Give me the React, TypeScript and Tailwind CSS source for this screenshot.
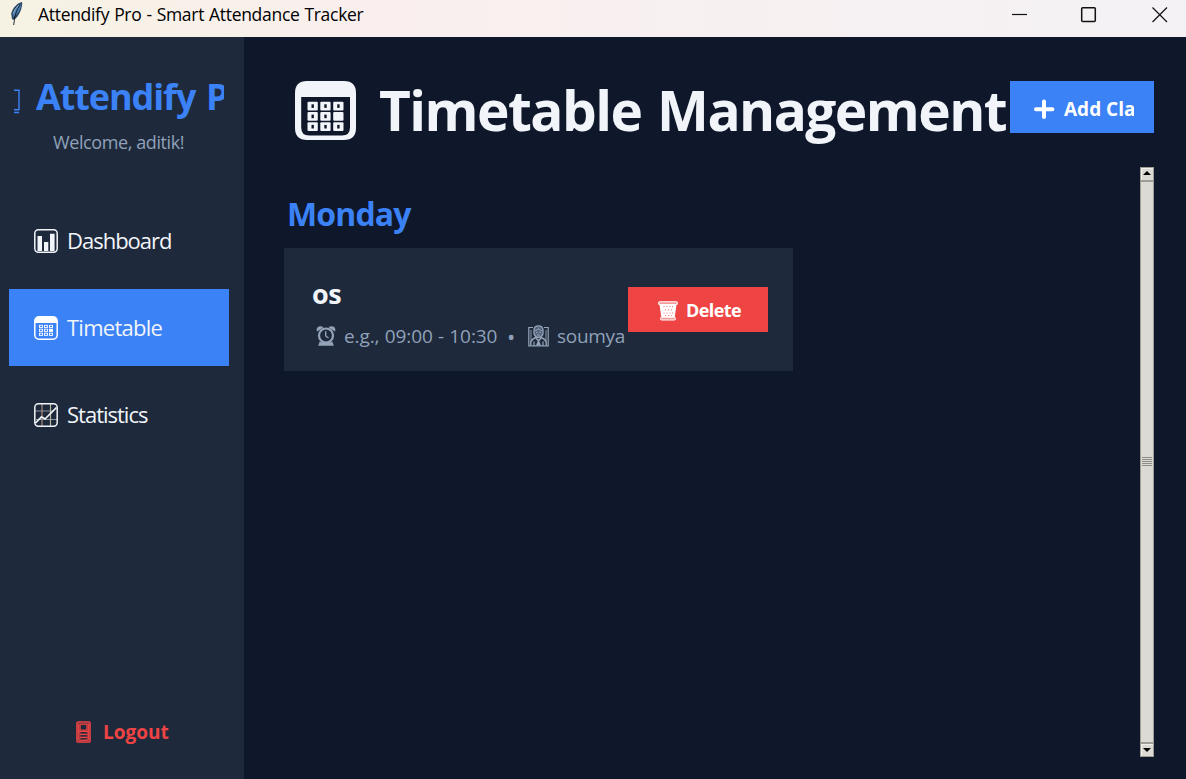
import type { ReactNode } from 'react';

function LargeCalendar() {
  const cols = [12.5, 25.3, 38.2];
  const rows = [20.7, 31, 41.3];
  return (
    <svg width="61" height="59" viewBox="0 0 61 59" className="shrink-0">
      <path fillRule="evenodd" fill="#f1f5f9" d="M12 0H49Q61 0 61 12V47Q61 59 49 59H12Q0 59 0 47V12Q0 0 12 0ZM6.2 16V46.5Q6.2 54.5 14.2 54.5H47Q55 54.5 55 46.5V16Z" />
      {rows.map((y, r) =>
        cols.map((x, c) => (
          <g key={`${r}${c}`}>
            <rect x={x} y={y} width="10.3" height="8.7" rx="1" fill="#f1f5f9" />
            {!(r === 1 && c === 2) && <rect x={x + 4} y={y + 2.6} width="2.4" height="3.6" fill="#0f172a" />}
          </g>
        )),
      )}
    </svg>
  );
}

function SmallCalendar() {
  return (
    <svg width="24" height="24" viewBox="0 0 24 24" className="shrink-0" fill="none" stroke="#fff">
      <rect x="0.8" y="0.8" width="22.4" height="22.4" rx="4.2" strokeWidth="1.5" />
      <path d="M1 7V4.5Q1 1 4.5 1H19.5Q23 1 23 4.5V7Z" fill="#fff" stroke="none" />
      {[9.3, 13.2, 17.2].map((y, r) =>
        [5.5, 10.5, 15.5].map((x, c) => (
          <rect key={`${r}${c}`} x={x} y={y} width="3" height="2.2" strokeWidth="0.9" fill={r === 1 && c === 2 ? '#fff' : 'none'} />
        )),
      )}
    </svg>
  );
}

function BarIcon() {
  return (
    <svg width="24" height="24" viewBox="0 0 24 24" className="shrink-0" fill="#f1f5f9">
      <rect x="0.8" y="0.8" width="22.4" height="22.4" rx="3.6" fill="none" stroke="#f1f5f9" strokeWidth="1.5" />
      <path d="M3.5 7H8V22H3.5zM10 13H14.3V22H10zM16 4.7H20.6V22H16z" />
    </svg>
  );
}

function TrendIcon() {
  return (
    <svg width="24" height="24" viewBox="0 0 24 24" className="shrink-0" fill="none">
      <path d="M1 8H20M2 16.5H23" stroke="#8b939e" strokeWidth="1.2" />
      <path d="M8 1V23" stroke="#a98b7d" strokeWidth="1.2" />
      <path d="M16.5 1V23" stroke="#b5b49a" strokeWidth="1.2" />
      <rect x="0.8" y="0.8" width="22.4" height="22.4" rx="3.6" stroke="#f1f5f9" strokeWidth="1.5" />
      <path d="M1.5 20L7.5 13.8L11 16L22.5 4.5" stroke="#f1f5f9" strokeWidth="1.7" />
    </svg>
  );
}

function Feather() {
  return (
    <svg width="13" height="25" viewBox="0 0 13 25" className="shrink-0">
      <path d="M12.2 1C7.5 1.5 2.5 7 1.2 12.5L2 18.3L4.2 18.8C9 15.5 12.5 7 12.2 1Z" fill="#2b4763" />
      <path d="M11 3C6.5 5 3.5 10 3 16C7.5 14 11 8 11 3Z" fill="#4b80b8" />
      <path d="M10 4Q5 10 3.7 24" fill="none" stroke="#111820" strokeWidth="0.9" />
      <path d="M8.8 4Q4.5 8 3 13" fill="none" stroke="#b5c8d8" strokeWidth="0.8" />
    </svg>
  );
}

function AlarmIcon() {
  return (
    <svg width="20" height="22" viewBox="0 0 20 22" className="shrink-0" fill="none" stroke="#94a3b8">
      <path d="M1 6.5Q-.3 3 2.8 1.6Q5.5.5 7.4 2.5ZM19 6.5Q20.3 3 17.2 1.6Q14.5.5 12.6 2.5Z" fill="#94a3b8" stroke="none" />
      <circle cx="10" cy="10.5" r="7" strokeWidth="2.2" />
      <path d="M9.7 6.3V11L12.5 13" strokeWidth="1.4" />
      <path d="M3.7 16.4L5.5 17.3H14.5L16.3 16.4L17.8 20.8H2.2Z" fill="#94a3b8" stroke="none" />
    </svg>
  );
}

function TeacherIcon() {
  return (
    <svg width="21" height="22" viewBox="0 0 21 22" className="shrink-0" fill="none" stroke="#94a3b8">
      <path d="M5 2.5H.8V20.8H20.2V2.5H16" strokeWidth="1.2" />
      <path d="M3 5V17M18 5V17" strokeWidth="0.9" />
      <path d="M6 9V4.5Q6.5.8 10.5.8Q14.5.8 15 4.5V9Q13.5 12.5 10.5 12.5Q7.5 12.5 6 9Z" strokeWidth="1.3" fill="#55647a" />
      <path d="M7.2 5.5Q10 5.3 10.5 3.5Q11 5.3 13.8 5.5M8 7.4H9.7M11.3 7.4H13M9 10H12" strokeWidth="1" />
      <path d="M2.8 20.5V17Q4 14 7.5 12.5L10.5 16L13.5 12.5Q17 14 18.2 17V20.5" strokeWidth="1.4" />
      <path d="M10.5 14L13 20.5H8Z" fill="#94a3b8" stroke="none" />
      <path d="M6 16.5V21M15 16.5V21" strokeWidth="1.2" />
    </svg>
  );
}

function BasketIcon() {
  return (
    <svg width="20" height="20" viewBox="0 0 20 20" className="mt-[2px] shrink-0">
      <path d="M1.5 3.5H18.5L16.6 17H3.4Z" fill="#fff" />
      <rect x="0.7" y="0.7" width="18.6" height="2.8" rx="1" fill="#f79a9a" stroke="#fff" strokeWidth="1.1" />
      <rect x="2.6" y="16.2" width="14.8" height="2.8" rx="1" fill="#f79a9a" stroke="#fff" strokeWidth="1" />
      <g fill="#f28080">
        {[5.5, 8.5, 11.5, 14].map((x) => <rect key={x} x={x} y="5" width="1" height="1.1" />)}
        {[6.8, 10, 13].map((x) => <rect key={x} x={x} y="8.3" width="1" height="1.3" />)}
        {[5.5, 8.5, 11.5, 14].map((x) => <rect key={x} x={x} y="11.5" width="1" height="1.1" />)}
        {[7, 10, 12.8].map((x) => <rect key={x} x={x} y="14" width="1" height="1.1" />)}
      </g>
    </svg>
  );
}

function DoorIcon() {
  return (
    <svg width="15" height="22" viewBox="0 0 15 22" className="shrink-0" fill="none" stroke="#ef4444">
      <rect x="0.9" y="0.9" width="13.2" height="20.2" rx="1.2" fill="#8a3642" strokeWidth="1.4" />
      <path d="M2.7 3V19M12.3 3V19" strokeWidth="1.2" />
      <rect x="4.2" y="3.4" width="6.6" height="5.6" fill="#1e293b" strokeWidth="0.9" />
      <path d="M2.5 10.4H12.5M4 13.4H11M4 16.4H11M3 19.2H12" strokeWidth="1.1" />
      <path d="M4.5 11.9H10.8M4.5 14.9H10.8M4.5 17.8H10.8" stroke="#1e293b" strokeWidth="1.1" />
    </svg>
  );
}

function NavItem({ icon, active, tracking, children }: { icon: ReactNode; active?: boolean; tracking: string; children: ReactNode }) {
  return (
    <button className={`flex h-[77px] w-[220px] items-center gap-[9px] pl-[25px] text-[22px] text-slate-100 ${active ? 'bg-[#3b82f6]' : ''}`}>
      {icon}
      <span className={`whitespace-nowrap ${tracking}`}>{children}</span>
    </button>
  );
}

function Scrollbar() {
  return (
    <div className="flex h-[590px] w-[14px] flex-col border border-[#9f9c96] bg-[#dcdad5]">
      <div className="flex h-[12px] items-start justify-start border-t border-l border-[#f2f0ec] pt-[2px] pl-px">
        <svg width="8" height="5" viewBox="0 0 8 5"><path d="M4 0L8 4H0Z" fill="#000" /></svg>
      </div>
      <div className="flex flex-1 flex-col items-center justify-center border-y-2 border-y-[#9f9c96] pb-[2px]">
        <div className="flex w-[10px] flex-col gap-px">
          {[0, 1, 2, 3, 4].map((n) => <div key={n} className="h-px bg-[#8f8c87]" />)}
        </div>
      </div>
      <div className="flex h-[12px] items-start justify-start border-t border-l border-[#f2f0ec] pt-[3px] pl-px">
        <svg width="8" height="5" viewBox="0 0 8 5"><path d="M0 0H8L4 4Z" fill="#000" /></svg>
      </div>
    </div>
  );
}

export default function App() {
  return (
    <div className="flex h-[779px] w-[1186px] flex-col overflow-hidden bg-[#0f172a] font-['Open_Sans','Noto_Sans',sans-serif]">
      <header className="flex h-[37px] shrink-0 items-start bg-linear-to-r from-[#f6f2e3] via-[#faefee] via-30% to-[#f4f2f5] pl-[10px]">
        <div className="mt-[1px]"><Feather /></div>
        <span className="ml-[15px] h-[30px] flex-1 whitespace-nowrap text-[17.5px] leading-[29px] tracking-[-0.3px] [word-spacing:0.7px] text-black">Attendify Pro - Smart Attendance Tracker</span>
        <svg width="156" height="16" viewBox="0 0 156 16" className="mt-[7px] mr-[18px]" fill="none" stroke="#111" strokeWidth="1.2">
          <path d="M0 7.5H15" />
          <rect x="69.7" y="0.8" width="13.6" height="13.6" rx="1" strokeWidth="1.5" />
          <path d="M140.5 0.5L155 15M155 0.5L140.5 15" />
        </svg>
      </header>
      <div className="flex min-h-0 flex-1">
        <aside className="flex w-[244px] shrink-0 flex-col bg-[#1e293b] pt-[33px] pl-[9px]">
          <div className="ml-[5px] flex h-[53px] w-[210px] items-center overflow-hidden whitespace-nowrap text-[#3b82f6]">
            <svg width="6" height="25" viewBox="0 0 6 25" className="mt-[10px] shrink-0" fill="none" stroke="currentColor" strokeWidth="1.4">
              <path d="M0 1.2H5V20.8H0M0 23.5H5" />
            </svg>
            <span className="ml-[16px] text-[36px] leading-[50px] font-bold tracking-[-1.1px] [word-spacing:2.5px]">Attendify Pro</span>
          </div>
          <p className="mt-[7px] ml-[44px] h-[24px] whitespace-nowrap text-[18px] leading-[24px] tracking-[-0.4px] text-slate-400">Welcome, aditik!</p>
          <nav className="mt-[48px] flex flex-col gap-[10px]">
            <NavItem icon={<BarIcon />} tracking="tracking-[-1px]">Dashboard</NavItem>
            <NavItem icon={<SmallCalendar />} tracking="tracking-[-0.75px]" active>Timetable</NavItem>
            <NavItem icon={<TrendIcon />} tracking="tracking-[-1px]">Statistics</NavItem>
          </nav>
          <button className="mt-auto mb-[32px] ml-[67px] flex h-[30px] items-center gap-[12px] text-[19px] font-bold text-[#ef4444]">
            <DoorIcon />
            <span>Logout</span>
          </button>
        </aside>
        <main className="flex min-w-0 flex-1 flex-col pt-[44px] pr-[32px] pl-[40px]">
          <div className="flex h-[86px] items-start">
            <div className="flex w-[726px] items-start pl-[11px]">
              <LargeCalendar />
              <h1 className="ml-[23px] h-[56px] whitespace-nowrap text-[55px] leading-[57px] font-bold tracking-[-1.55px] [word-spacing:3px] text-slate-100">Timetable Management</h1>
            </div>
            <button className="flex h-[52px] w-[144px] shrink-0 items-center bg-[#3b82f6] pr-[20px] pl-[24px] text-white">
              <svg width="21" height="21" viewBox="0 0 21 21" className="mt-[4px] shrink-0" stroke="#fff" strokeWidth="4" strokeLinecap="round"><path d="M10 2.5V18M2 10.2H18.4" /></svg>
              <span className="mt-[4px] ml-[9px] min-w-0 flex-1 overflow-hidden whitespace-nowrap text-left text-[19px] font-bold">Add Class</span>
            </button>
          </div>
          <div className="flex h-[590px] justify-between">
            <section className="w-[509px] pt-[24px]">
              <h2 className="ml-[3px] h-[57px] text-[32px] leading-[46px] font-bold tracking-[-0.85px] text-[#3b82f6]">Monday</h2>
              <article className="flex h-[123px] justify-between bg-[#1e293b] pr-[25px] pl-[28px]">
                <div className="pt-[31px]">
                  <h3 className="h-[30px] text-[27px] leading-[30px] font-bold tracking-[-0.4px] text-slate-100">os</h3>
                  <div className="mt-[12px] ml-[4px] flex h-[30px] items-center whitespace-nowrap text-[19px] tracking-[-0.3px] text-slate-400">
                    <AlarmIcon />
                    <span className="ml-[8px] w-[163px] tracking-[-0.1px] [word-spacing:0.5px]">e.g., 09:00 - 10:30</span>
                    <span className="w-[21px] text-[22px] leading-[30px]">•</span>
                    <TeacherIcon />
                    <span className="ml-[8px]">soumya</span>
                  </div>
                </div>
                <button className="mt-[39px] flex h-[45px] w-[140px] shrink-0 items-center bg-[#ef4444] pl-[30px] text-[18px] font-bold tracking-[-0.6px] text-white">
                  <BasketIcon />
                  <span className="mt-[2px] ml-[8px]">Delete</span>
                </button>
              </article>
            </section>
            <Scrollbar />
          </div>
        </main>
      </div>
    </div>
  );
}
